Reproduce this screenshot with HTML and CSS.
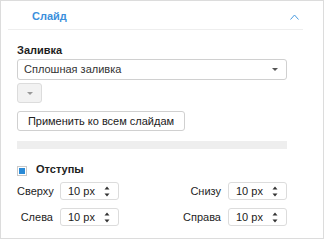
FILE: index.html
```html
<!DOCTYPE html>
<html lang="ru">
<head>
<meta charset="utf-8">
<link rel="stylesheet" href="styles.css">
</head>
<body>
<div class="panel">
  <div class="header">
    <span class="title">Слайд</span>
    <svg class="chev" width="9" height="6" viewBox="0 0 9 6"><path d="M0.5 5.5 L4.5 1 L8.5 5.5" fill="none" stroke="#4a9be0" stroke-width="1"/></svg>
  </div>
  <div class="content">
    <div class="label">Заливка</div>
    <div class="select">
      <span>Сплошная заливка</span>
      <svg width="6" height="3" viewBox="0 0 6 3"><path d="M0 0 H6 L3 3 Z" fill="#555"/></svg>
    </div>
    <div class="color-btn">
      <svg width="6" height="3" viewBox="0 0 6 3"><path d="M0 0 H6 L3 3 Z" fill="#999"/></svg>
    </div>
    <button class="apply">Применить ко всем слайдам</button>
    <div class="bar"></div>
    <div class="check-row">
      <span class="checkbox"></span>
      <span class="check-label">Отступы</span>
    </div>
    <div class="grid">
      <span class="fl">Сверху</span>
      <div class="spin"><span>10 px</span><svg width="6" height="11" viewBox="0 0 6 11"><path d="M0.5 3.5 L3 0.5 L5.5 3.5 Z M0.5 7.5 L3 10.5 L5.5 7.5 Z" fill="#333"/></svg></div>
      <span class="fl">Снизу</span>
      <div class="spin"><span>10 px</span><svg width="6" height="11" viewBox="0 0 6 11"><path d="M0.5 3.5 L3 0.5 L5.5 3.5 Z M0.5 7.5 L3 10.5 L5.5 7.5 Z" fill="#333"/></svg></div>
      <span class="fl">Слева</span>
      <div class="spin"><span>10 px</span><svg width="6" height="11" viewBox="0 0 6 11"><path d="M0.5 3.5 L3 0.5 L5.5 3.5 Z M0.5 7.5 L3 10.5 L5.5 7.5 Z" fill="#333"/></svg></div>
      <span class="fl">Справа</span>
      <div class="spin"><span>10 px</span><svg width="6" height="11" viewBox="0 0 6 11"><path d="M0.5 3.5 L3 0.5 L5.5 3.5 Z M0.5 7.5 L3 10.5 L5.5 7.5 Z" fill="#333"/></svg></div>
    </div>
  </div>
</div>
</body>
</html>
```
FILE: styles.css
```css
html, body {
  margin: 0;
  padding: 0;
  background: #fff;
}
.panel {
  box-sizing: border-box;
  width: 324px;
  height: 239px;
  border: 1px solid #dcdcdc;
  font-family: "Liberation Sans", Arial, sans-serif;
  font-size: 11px;
  line-height: 13px;
  color: #222;
}
.header {
  display: flex;
  align-items: center;
  justify-content: space-between;
  box-sizing: border-box;
  height: 29px;
  margin: 0 20px 0 7px;
  padding: 3px 4px 0 24px;
  border-bottom: 1px solid #eeeeee;
}
.title {
  color: #3b8fdc;
  font-weight: bold;
}
.chev {
  display: block;
}
.content {
  padding-left: 16px;
}
.label {
  margin-top: 14px;
  font-weight: bold;
  color: #1e1e1e;
}
.select {
  box-sizing: border-box;
  width: 270px;
  height: 21px;
  margin-top: 2px;
  border: 1px solid #d0d0d0;
  border-radius: 3px;
  display: flex;
  align-items: center;
  justify-content: space-between;
  padding: 0 8px 0 6px;
  color: #333;
}
.select svg {
  display: block;
}
.color-btn {
  box-sizing: border-box;
  width: 25px;
  height: 20px;
  margin-top: 3px;
  background: #f2f2f2;
  border: 1px solid #dcdcdc;
  border-radius: 3px;
  display: flex;
  align-items: center;
  justify-content: center;
}
.color-btn svg {
  display: block;
}
.apply {
  display: block;
  box-sizing: border-box;
  width: 168px;
  height: 20px;
  margin-top: 8px;
  padding: 0;
  background: #fff;
  border: 1px solid #d0d0d0;
  border-radius: 3px;
  font-family: inherit;
  font-size: 11px;
  color: #222;
}
.bar {
  width: 270px;
  height: 8px;
  margin-top: 10px;
  background: #eeeeee;
}
.check-row {
  display: flex;
  align-items: flex-start;
  gap: 9px;
  height: 13px;
  margin-top: 14px;
}
.checkbox {
  box-sizing: border-box;
  width: 10px;
  height: 10px;
  margin-top: 3px;
  border: 1px solid #c9c9c9;
  background: #2a8ad6;
  box-shadow: inset 0 0 0 1px #fff;
}
.check-label {
  font-weight: bold;
  color: #1e1e1e;
}
.grid {
  display: grid;
  grid-template-columns: 36px 59px 1fr 59px;
  grid-auto-rows: 18px;
  column-gap: 7px;
  row-gap: 8px;
  width: 270px;
  margin-top: 6px;
  align-items: center;
}
.fl {
  text-align: right;
  color: #1e1e1e;
}
.spin {
  box-sizing: border-box;
  height: 18px;
  border: 1px solid #dcdcdc;
  border-radius: 3px;
  display: flex;
  align-items: center;
  justify-content: space-between;
  padding: 0 8px 0 7px;
  color: #222;
}
.spin svg {
  display: block;
}
```
